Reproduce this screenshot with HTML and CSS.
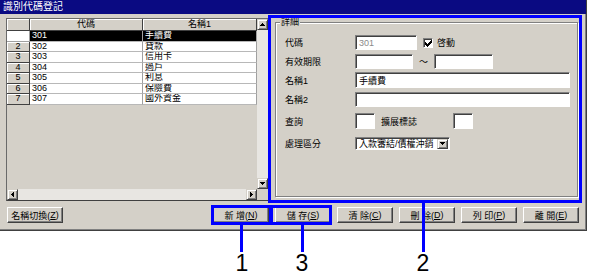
FILE: index.html
```html
<!DOCTYPE html>
<html lang="zh-Hant">
<head>
<meta charset="utf-8">
<title>識別代碼登記</title>
<link rel="stylesheet" href="styles.css">
</head>
<body>
<div class="stage">
  <div class="window">
    <div class="titlebar">識別代碼登記</div>
    <div class="main">
      <div class="grid">
        <div class="grid-body">
          <div class="table">
            <div class="row head">
              <div class="ind"></div>
              <div class="c-code hcell">代碼</div>
              <div class="c-name hcell">名稱1</div>
            </div>
            <div class="row sel">
              <div class="ind cur"></div>
              <div class="c-code">301</div>
              <div class="c-name">手續費</div>
            </div>
            <div class="row">
              <div class="ind">2</div>
              <div class="c-code">302</div>
              <div class="c-name">貸款</div>
            </div>
            <div class="row">
              <div class="ind">3</div>
              <div class="c-code">303</div>
              <div class="c-name">信用卡</div>
            </div>
            <div class="row">
              <div class="ind">4</div>
              <div class="c-code">304</div>
              <div class="c-name">過戶</div>
            </div>
            <div class="row">
              <div class="ind">5</div>
              <div class="c-code">305</div>
              <div class="c-name">利息</div>
            </div>
            <div class="row">
              <div class="ind">6</div>
              <div class="c-code">306</div>
              <div class="c-name">保險費</div>
            </div>
            <div class="row">
              <div class="ind">7</div>
              <div class="c-code">307</div>
              <div class="c-name">國外資金</div>
            </div>
          </div>
          <div class="vscroll">
            <div class="sbtn"><svg width="5" height="3" viewBox="0 0 5 3"><path d="M2 0h1v1h1v1h1v1H0V2h1V1h1z"/></svg></div>
            <div class="track"></div>
            <div class="sbtn"><svg width="5" height="3" viewBox="0 0 5 3"><path d="M0 0h5v1H4v1H3v1H2V2H1V1H0z"/></svg></div>
          </div>
        </div>
        <div class="hscroll">
          <div class="sbtn"><svg width="3" height="5" viewBox="0 0 3 5"><path d="M2 0h1v5H2V4H1V3H0V2h1V1h1z"/></svg></div>
          <div class="track"></div>
          <div class="sbtn"><svg width="3" height="5" viewBox="0 0 3 5"><path d="M0 0h1v1h1v1h1v1H2v1H1v1H0z"/></svg></div>
          <div class="corner"></div>
        </div>
      </div>

      <div class="group">
        <span class="legend">詳細</span>
        <div class="frow r1">
          <span class="lbl">代碼</span>
          <span class="field w-code disabled">301</span>
          <span class="check"><svg width="7" height="7" viewBox="0 0 7 7"><path d="M0 2h1v1h1v1h1V3h1V2h1V1h1V0h1v3H6v1H5v1H4v1H3v1H2V6H1V5H0z"/></svg></span>
          <span class="chk-label">啓動</span>
        </div>
        <div class="frow r2">
          <span class="lbl">有效期限</span>
          <span class="field w-date1"></span>
          <span class="tilde">～</span>
          <span class="field w-date2"></span>
        </div>
        <div class="frow r3">
          <span class="lbl">名稱1</span>
          <span class="field w-name">手續費</span>
        </div>
        <div class="frow r4">
          <span class="lbl">名稱2</span>
          <span class="field w-name"></span>
        </div>
        <div class="frow r5">
          <span class="lbl">查詢</span>
          <span class="field w-small"></span>
          <span class="lbl2">擴展標誌</span>
          <span class="field w-small"></span>
        </div>
        <div class="frow r6">
          <span class="lbl">處理區分</span>
          <span class="field combo">
            <span class="combo-text">入款審結/債權沖銷</span>
            <span class="dd"><svg width="5" height="3" viewBox="0 0 5 3"><path d="M0 0h5v1H4v1H3v1H2V2H1V1H0z"/></svg></span>
          </span>
        </div>
      </div>
    </div>

    <div class="buttons">
      <div class="btn">名稱切換(<u>Z</u>)</div>
      <div class="btn-group">
        <div class="btn">新 增(<u>N</u>)</div>
        <div class="btn">儲 存(<u>S</u>)</div>
        <div class="btn">清 除(<u>C</u>)</div>
        <div class="btn">刪 除(<u>D</u>)</div>
        <div class="btn">列 印(<u>P</u>)</div>
        <div class="btn">離 開(<u>E</u>)</div>
      </div>
    </div>
  </div>

  <div class="hl hl-detail"></div>
  <div class="hl hl-new"></div>
  <div class="hl hl-save"></div>
  <div class="lead lead-1"></div>
  <div class="lead lead-3"></div>
  <div class="lead lead-2"></div>
  <div class="num num-1">1</div>
  <div class="num num-3">3</div>
  <div class="num num-2">2</div>
</div>
</body>
</html>
```

FILE: styles.css
```css
* { box-sizing: border-box; }
html, body { margin: 0; padding: 0; background: #fff; }
body {
  font-family: "Liberation Sans", "Noto Sans CJK TC", sans-serif;
  font-size: 9px;
  color: #000;
}
u { text-decoration: underline; }

.stage { position: relative; width: 591px; height: 280px; overflow: hidden; }

.window {
  width: 587px;
  height: 231px;
  background: #d4d0c8;
  border-right: 1px solid #404040;
  border-bottom: 1px solid #404040;
  box-shadow: inset -1px -1px 0 #808080;
  display: flex;
  flex-direction: column;
}

.titlebar {
  height: 14px;
  flex: none;
  background: #0a0a82;
  color: #fff;
  font-size: 10px;
  line-height: 14px;
  padding-left: 3px;
  white-space: nowrap;
}

.main {
  display: flex;
  align-items: flex-start;
  gap: 6px;
  padding: 4px 0 0 6px;
  flex: none;
}

/* grid */
.grid {
  width: 263px;
  height: 183px;
  border: 1px solid #404040;
  border-top-color: #6a6a6a;
  border-left-color: #6a6a6a;
  display: flex;
  flex-direction: column;
  flex: none;
}
.grid-body { display: flex; height: 170px; }
.table {
  width: 250px;
  background: #d4d0c8;
  display: flex;
  flex-direction: column;
}
.row { display: flex; height: 10.5px; flex: none; }
.row.head { height: 12px; }
.row > div {
  overflow: hidden;
  white-space: nowrap;
  line-height: 9px;
}
.ind {
  width: 23px;
  background: #d4d0c8;
  border-right: 1px solid #404040;
  border-bottom: 1px solid #404040;
  box-shadow: inset 1px 1px 0 #fff;
  text-align: center;
}
.ind.cur { background: #fff; box-shadow: none; border-color: #a0a0a0; }
.c-code { width: 113px; }
.c-name { width: 114px; }
.c-code, .c-name {
  background: #fff;
  border-right: 1px solid #a0a0a0;
  border-bottom: 1px solid #b8b8b8;
  padding-left: 2px;
}
.row.head > div { line-height: 11px; }
.c-code.hcell, .c-name.hcell {
  background: #d4d0c8;
  text-align: center;
  padding-left: 0;
  border-right: 1px solid #404040;
  border-bottom: 1px solid #404040;
  box-shadow: inset 1px 1px 0 #fff;
}
.row.sel .c-code, .row.sel .c-name { background: #000; color: #fff; }

.vscroll { width: 11px; display: flex; flex-direction: column; }
.hscroll { height: 11px; display: flex; }
.track { flex: 1; background: #e8e6e2; }
.corner { width: 11px; background: #d4d0c8; }
.sbtn {
  width: 11px;
  height: 11px;
  flex: none;
  background: #d4d0c8;
  border: 1px solid;
  border-color: #d4d0c8 #404040 #404040 #d4d0c8;
  box-shadow: inset 1px 1px 0 #fff, inset -1px -1px 0 #808080;
  display: flex;
  align-items: center;
  justify-content: center;
}
.sbtn svg, .dd svg, .check svg { display: block; shape-rendering: crispEdges; }

/* detail group */
.group {
  position: relative;
  margin-top: 4px;
  width: 303px;
  height: 175px;
  border: 1px solid #808080;
  box-shadow: inset 1px 1px 0 #fff, 1px 1px 0 #fff;
  padding: 12px 0 0 9px;
  flex: none;
}
.legend {
  position: absolute;
  top: -6px;
  left: 4px;
  padding: 0 1px;
  background: #d4d0c8;
  line-height: 11px;
}
.frow { display: flex; align-items: center; }
.r1 { height: 15px; }
.r2 { height: 15px; margin-top: 4px; }
.r3 { height: 16px; margin-top: 3px; }
.r4 { height: 15px; margin-top: 4px; }
.r5 { height: 16px; margin-top: 6px; }
.r6 { height: 13px; margin-top: 8px; }
.lbl { width: 70px; flex: none; white-space: nowrap; }
.lbl2 { width: 72px; margin-left: 6px; flex: none; white-space: nowrap; }

.field {
  align-self: stretch;
  background: #fff;
  border: 1px solid;
  border-color: #808080 #fff #fff #808080;
  box-shadow: inset 1px 1px 0 #404040;
  padding-left: 3px;
  display: flex;
  align-items: center;
  white-space: nowrap;
  flex: none;
}
.field.disabled { color: #8a8a8a; }
.w-code { width: 62px; }
.w-date1 { width: 58px; }
.w-date2 { width: 59px; }
.w-name { width: 215px; }
.w-small { width: 20px; }
.tilde { width: 21px; text-align: center; flex: none; }

.check {
  width: 10px;
  height: 10px;
  margin-left: 6px;
  background: #fff;
  border: 1px solid;
  border-color: #808080 #fff #fff #808080;
  box-shadow: inset 1px 1px 0 #404040;
  display: flex;
  align-items: center;
  justify-content: center;
  flex: none;
}
.check svg { margin: 1px 0 0 1px; }
.chk-label { margin-left: 4px; }

.combo { width: 95px; justify-content: space-between; padding-right: 1px; }
.combo-text { flex: 1; overflow: hidden; }
.dd {
  width: 11px;
  height: 10px;
  background: #d4d0c8;
  border: 1px solid;
  border-color: #d4d0c8 #404040 #404040 #d4d0c8;
  box-shadow: inset 1px 1px 0 #fff, inset -1px -1px 0 #808080;
  display: flex;
  align-items: center;
  justify-content: center;
  flex: none;
}

/* buttons */
.buttons {
  display: flex;
  align-items: center;
  padding: 0 7px;
  margin-top: 6px;
  height: 16px;
}
.btn-group { display: flex; gap: 6px; margin-left: auto; }
.btn {
  width: 56px;
  height: 16px;
  background: #d4d0c8;
  border: 1px solid;
  border-color: #fff #404040 #404040 #fff;
  box-shadow: inset -1px -1px 0 #808080;
  display: flex;
  align-items: center;
  justify-content: center;
  white-space: nowrap;
}

/* annotation overlays */
.hl { position: absolute; border: 3px solid #0000ff; }
.hl-detail { left: 268px; top: 15px; width: 314px; height: 188px; }
.hl-new { left: 211px; top: 205px; width: 61px; height: 20px; }
.hl-save { left: 270px; top: 205px; width: 62px; height: 20px; }
.lead { position: absolute; width: 3px; background: #0000ff; }
.lead-1 { left: 240px; top: 224px; height: 28px; }
.lead-3 { left: 301px; top: 224px; height: 28px; }
.lead-2 { left: 422px; top: 202px; height: 50px; }
.num {
  position: absolute;
  top: 252px;
  width: 20px;
  margin-left: -10px;
  text-align: center;
  font-family: "Liberation Sans", sans-serif;
  font-size: 23px;
  line-height: 23px;
}
.num-1 { left: 242px; }
.num-3 { left: 302px; }
.num-2 { left: 423px; }
```
